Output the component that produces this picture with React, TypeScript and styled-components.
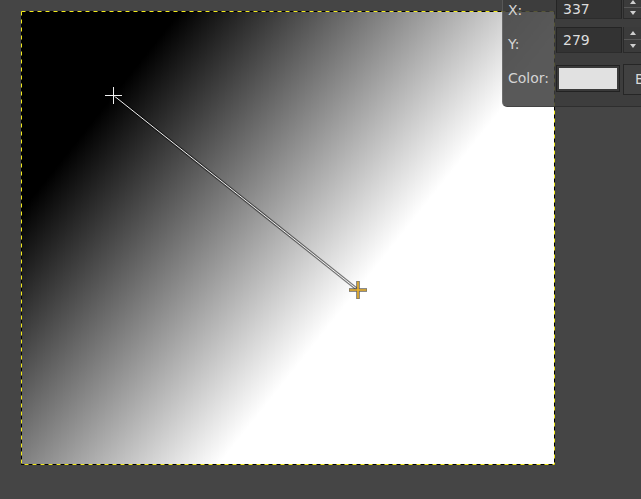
import React from "react";
import styled, { createGlobalStyle } from "styled-components";

const GlobalStyle = createGlobalStyle`
  html, body {
    margin: 0;
    padding: 0;
    background: #454545;
    overflow: hidden;
  }
  body {
    font-family: "DejaVu Sans", "Liberation Sans", sans-serif;
  }
`;

const Viewport = styled.div`
  position: relative;
  width: 641px;
  height: 499px;
  overflow: hidden;
  box-sizing: border-box;
  padding: 11px 0 0 21px;
  background: #454545;
`;

const ImageLayer = styled.div`
  position: relative;
  width: 534px;
  height: 454px;
  background: linear-gradient(128.52deg, #000 17.8%, #fff 62.4%);
`;

const Overlay = styled.svg`
  position: absolute;
  left: 0;
  top: 0;
  width: 100%;
  height: 100%;
  overflow: visible;
`;

const EditorPanel = styled.div`
  position: absolute;
  left: 502px;
  top: -3px;
  display: grid;
  grid-template-columns: 47px 66px 80px;
  grid-template-rows: 22px 26px 34px;
  column-gap: 1px;
  row-gap: 8px;
  padding: 0 0 11px 5px;
  background: rgba(60, 60, 60, 0.85);
  border-left: 1px solid rgba(255, 255, 255, 0.14);
  border-bottom: 1px solid rgba(0, 0, 0, 0.25);
  border-bottom-left-radius: 5px;
`;

const FieldLabel = styled.span<{ $align: "end" | "center" }>`
  align-self: ${(p) => p.$align};
  font-size: 14px;
  line-height: 17px;
  color: #d4d4d4;
  white-space: nowrap;
`;

const Entry = styled.div<{ $textTop: number }>`
  box-sizing: border-box;
  height: 100%;
  background: #333333;
  border: 1px solid #242424;
  border-bottom-color: #2c2c2c;
  color: #dcdcdc;
  font-size: 14px;
  line-height: 17px;
  padding: ${(p) => p.$textTop}px 0 0 6px;
`;

const Spin = styled.div`
  box-sizing: border-box;
  width: 19px;
  height: 100%;
  display: flex;
  flex-direction: column;
  background: #3b3b3b;
  border-left: 1px solid #2a2a2a;
  border-bottom: 1px solid #2a2a2a;
`;

const SpinButton = styled.div`
  flex: 1;
  display: flex;
  align-items: center;
  justify-content: center;
  & + & {
    border-top: 1px solid #575757;
  }
`;

const Arrow = styled.span<{ $up: boolean }>`
  width: 0;
  height: 0;
  border-left: 3.5px solid transparent;
  border-right: 3.5px solid transparent;
  ${(p) =>
    p.$up
      ? "border-bottom: 4px solid #cfcfcf;"
      : "border-top: 4px solid #cfcfcf;"}
`;

const ColorButton = styled.div`
  box-sizing: border-box;
  align-self: center;
  width: 64px;
  height: 27px;
  padding: 2px 2px;
  background: #3a3a3a;
  border: 1px solid #222;
`;

const Swatch = styled.div`
  width: 100%;
  height: 100%;
  background: #e1e1e1;
`;

const PushButton = styled.div`
  box-sizing: border-box;
  align-self: center;
  height: 31px;
  margin-top: 2px;
  display: flex;
  align-items: center;
  padding-left: 11px;
  background: #414141;
  border: 1px solid #262626;
  color: #d8d8d8;
  font-size: 14px;
  white-space: nowrap;
`;

function SpinEntry({ value, textTop }: { value: string; textTop: number }) {
  return (
    <>
      <Entry $textTop={textTop}>{value}</Entry>
      <Spin>
        <SpinButton>
          <Arrow $up />
        </SpinButton>
        <SpinButton>
          <Arrow $up={false} />
        </SpinButton>
      </Spin>
    </>
  );
}

const start = { x: 92, y: 84 };
const end = { x: 337, y: 279 };

export default function App() {
  return (
    <>
      <GlobalStyle />
      <Viewport>
        <ImageLayer>
          <Overlay viewBox="0 0 534 454">
            <rect x={0.5} y={0.5} width={533} height={453} fill="none" stroke="#000" strokeWidth={1} />
            <rect
              x={0.5}
              y={0.5}
              width={533}
              height={453}
              fill="none"
              stroke="#f2ea1c"
              strokeWidth={1}
              strokeDasharray="4 4"
            />
            <line x1={start.x} y1={start.y} x2={end.x} y2={end.y} stroke="rgba(0,0,0,0.5)" strokeWidth={3} />
            <line x1={start.x} y1={start.y} x2={end.x} y2={end.y} stroke="#f4f4f4" strokeWidth={1} />
            <path
              d={`M${start.x - 8} ${start.y + 0.5} H${start.x + 9} M${start.x + 0.5} ${start.y - 8} V${start.y + 9}`}
              stroke="rgba(0,0,0,0.5)"
              strokeWidth={3}
            />
            <path
              d={`M${start.x - 8} ${start.y + 0.5} H${start.x + 9} M${start.x + 0.5} ${start.y - 8} V${start.y + 9}`}
              stroke="#f0f0f0"
              strokeWidth={1}
            />
            <path
              d={`M${end.x - 9} ${end.y} H${end.x + 9} M${end.x} ${end.y - 9} V${end.y + 9}`}
              stroke="rgba(50,50,50,0.75)"
              strokeWidth={3.5}
            />
            <path
              d={`M${end.x - 8.5} ${end.y} H${end.x + 8.5} M${end.x} ${end.y - 8.5} V${end.y + 8.5}`}
              stroke="#efb52c"
              strokeWidth={1.6}
            />
          </Overlay>
        </ImageLayer>
        <EditorPanel>
          <FieldLabel $align="end">X:</FieldLabel>
          <SpinEntry value="337" textTop={3} />
          <FieldLabel $align="end">Y:</FieldLabel>
          <SpinEntry value="279" textTop={4} />
          <FieldLabel $align="center">Color:</FieldLabel>
          <ColorButton>
            <Swatch />
          </ColorButton>
          <PushButton>BG</PushButton>
        </EditorPanel>
      </Viewport>
    </>
  );
}
